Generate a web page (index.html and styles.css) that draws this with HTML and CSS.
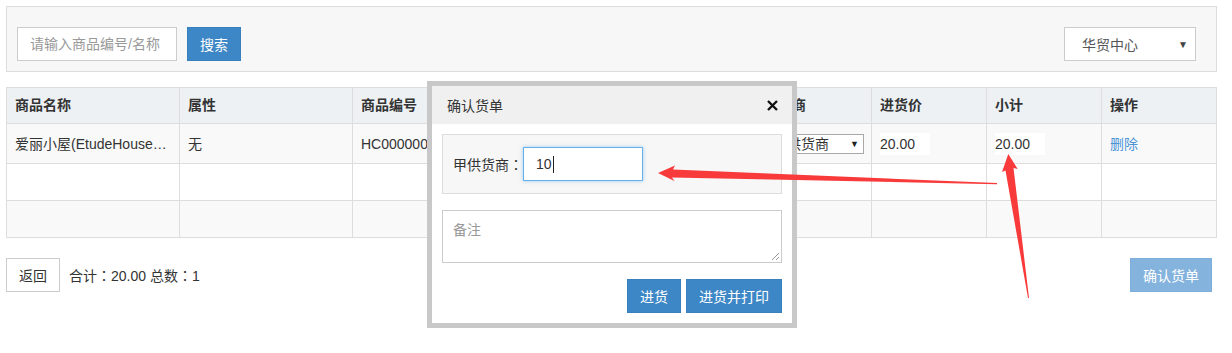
FILE: index.html
```html
<!DOCTYPE html>
<html lang="zh-CN">
<head>
    <meta charset="UTF-8">
    <title>进货单</title>
    <link rel="stylesheet" href="styles.css">
</head>
<body>
    <div class="page">
        <div class="toolbar">
            <div class="search">
                <input type="text" class="search-input" placeholder="请输入商品编号/名称">
                <button class="btn btn-primary">搜索</button>
            </div>
            <div class="store-select"><span>华贸中心</span><span class="caret">▼</span></div>
        </div>

        <table class="goods-table">
            <colgroup>
                <col style="width:173px"><col style="width:173px"><col style="width:173px"><col style="width:216px">
                <col style="width:130px"><col style="width:115px"><col style="width:115px"><col style="width:115px">
            </colgroup>
            <thead>
                <tr>
                    <th>商品名称</th><th>属性</th><th>商品编号</th><th>进货数量</th>
                    <th>甲供货商</th><th>进货价</th><th>小计</th><th>操作</th>
                </tr>
            </thead>
            <tbody>
                <tr class="odd">
                    <td class="ellipsis">爱丽小屋(EtudeHouse)玩转色彩眼影</td>
                    <td>无</td>
                    <td>HC0000001</td>
                    <td><span class="cell-input">1</span></td>
                    <td><div class="mini-select"><span>选择供货商</span><span class="mini-caret">▼</span></div></td>
                    <td><span class="cell-input">20.00</span></td>
                    <td><span class="cell-input">20.00</span></td>
                    <td><a class="link" href="#">删除</a></td>
                </tr>
                <tr><td>&nbsp;</td><td></td><td></td><td></td><td></td><td></td><td></td><td></td></tr>
                <tr class="odd"><td>&nbsp;</td><td></td><td></td><td></td><td></td><td></td><td></td><td></td></tr>
            </tbody>
        </table>

        <div class="footer">
            <div class="footer-left">
                <button class="btn btn-default">返回</button>
                <span class="summary">合计<span class="colon" lang="zh-TW">：</span>20.00 总数<span class="colon" lang="zh-TW">：</span>1</span>
            </div>
            <button class="btn btn-light">确认货单</button>
        </div>
    </div>

    <div class="modal">
        <div class="modal-head">
            <span>确认货单</span>
            <svg class="close" width="11" height="11" viewBox="0 0 11 11"><path d="M1 1L10 10M10 1L1 10" stroke="#111" stroke-width="2.4"/></svg>
        </div>
        <div class="modal-body">
            <div class="supplier-box">
                <label>甲供货商<span class="colon" lang="zh-TW">：</span></label>
                <div class="focus-input">10<span class="cursor"></span></div>
            </div>
            <div class="remark"><span>备注</span><span class="grip"></span></div>
            <div class="modal-actions">
                <button class="btn btn-primary">进货</button>
                <button class="btn btn-primary">进货并打印</button>
            </div>
        </div>
    </div>

    <svg class="marks" width="1232" height="353" viewBox="0 0 1232 353">
        <polygon fill="#f93a3a" points="658,173 675,165.5 673,169.5 997,183 997,184.2 672,177.5 674.5,181"/>
        <polygon fill="#f93a3a" points="1008.3,154 1017.7,169 1013.5,168 1029,298 1028,298 1005.5,170.5 1002,172"/>
    </svg>
</body>
</html>
```

FILE: styles.css
```css
body {
    margin: 0;
    background: #fff;
    font-family: "Liberation Sans", "Noto Sans CJK SC", sans-serif;
    font-size: 14px;
    color: #333;
}
.page { width: 1211px; padding: 6px; }
.colon { font-family: "Noto Sans CJK TC", sans-serif; }

.toolbar {
    border: 1px solid #ddd;
    background: #f7f7f7;
    padding: 20px 20px 10px 10px;
    box-sizing: border-box;
    height: 66px;
    display: flex;
    justify-content: space-between;
    align-items: flex-start;
}
.search { display: flex; gap: 10px; }
.search-input {
    width: 160px; height: 34px; box-sizing: border-box;
    border: 1px solid #ccc; padding: 0 12px;
    font: 14px "Liberation Sans", "Noto Sans CJK SC", sans-serif;
    outline: none;
}
.search-input::placeholder { color: #999; }
.store-select {
    width: 132px; height: 34px; box-sizing: border-box;
    border: 1px solid #ccc; background: #fff;
    display: flex; align-items: center; justify-content: space-between;
    padding: 0 7px 0 17px; color: #555;
}
.caret { font-size: 10px; color: #444; }

.btn {
    height: 34px; box-sizing: border-box; padding: 0;
    font: 14px "Liberation Sans", "Noto Sans CJK SC", sans-serif;
    cursor: pointer;
}
.btn-primary { width: 54px; background: #3e87c6; border: 1px solid #3a7fbd; color: #fff; }
.btn-default { width: 54px; background: #fff; border: 1px solid #ccc; color: #333; }
.btn-light { width: 82px; background: #84b3dd; border: 1px solid #7eaedb; color: #fff; }

.goods-table {
    margin-top: 15px;
    width: 1211px;
    border-collapse: collapse;
    table-layout: fixed;
}
.goods-table th, .goods-table td {
    border: 1px solid #ddd;
    padding: 8px 8px;
    line-height: 20px;
    text-align: left;
    white-space: nowrap;
    overflow: hidden;
}
.goods-table th { background: #edf1f4; font-weight: bold; line-height: 19px; }
.goods-table tr.odd td { background: #f9f9f9; }
.goods-table tbody tr:first-child td { height: 22px; line-height: 22px; }
.ellipsis { text-overflow: ellipsis; }
.cell-input { display: inline-block; width: 50px; height: 22px; background: #fff; vertical-align: middle; }
.mini-select {
    width: 114px; height: 20px; box-sizing: border-box;
    border: 1px solid #a9a9a9; background: #fff;
    display: flex; align-items: center; justify-content: space-between;
    padding: 0 4px 0 8px; line-height: 18px;
}
.mini-caret { font-size: 9px; color: #222; }
.link { color: #4b93d6; text-decoration: none; }

.footer {
    margin-top: 20px;
    display: flex;
    justify-content: space-between;
    align-items: center;
    padding-right: 5px;
}
.footer-left { display: flex; align-items: center; gap: 9px; }

.modal {
    position: fixed;
    left: 427px; top: 81px;
    width: 360px;
    border: 5px solid #c8c8c8;
    background: #fff;
}
.modal-head {
    height: 38px;
    background: #f0f0f0;
    display: flex; align-items: center; justify-content: space-between;
    padding: 0 14px 0 15px;
}
.close { display: block; }
.modal-body { padding: 10px; }
.supplier-box {
    height: 60px; box-sizing: border-box;
    border: 1px solid #ddd; background: #f7f7f7;
    display: flex; align-items: center;
    padding: 0 10px;
}
.focus-input {
    width: 120px; height: 34px; box-sizing: border-box;
    border: 1px solid #66afe9;
    box-shadow: 0 0 4px rgba(102, 175, 233, 0.6);
    background: #fff;
    padding: 0 12px;
    display: flex; align-items: center;
}
.cursor { display: inline-block; width: 1px; height: 17px; background: #222; margin-left: 1px; }
.remark {
    position: relative;
    margin-top: 16px;
    height: 53px; box-sizing: border-box;
    border: 1px solid #ccc;
    padding: 8px 10px;
    color: #999;
}
.grip {
    position: absolute; right: 2px; bottom: 2px;
    width: 7px; height: 7px;
    background: linear-gradient(135deg, transparent 45%, #999 45%, #999 55%, transparent 55%, transparent 72%, #999 72%, #999 82%, transparent 82%);
}
.modal-actions { margin-top: 16px; display: flex; justify-content: flex-end; gap: 5px; }
.modal-actions .btn-primary:last-child { width: 96px; }

.marks { position: fixed; left: 0; top: 0; pointer-events: none; }
```
